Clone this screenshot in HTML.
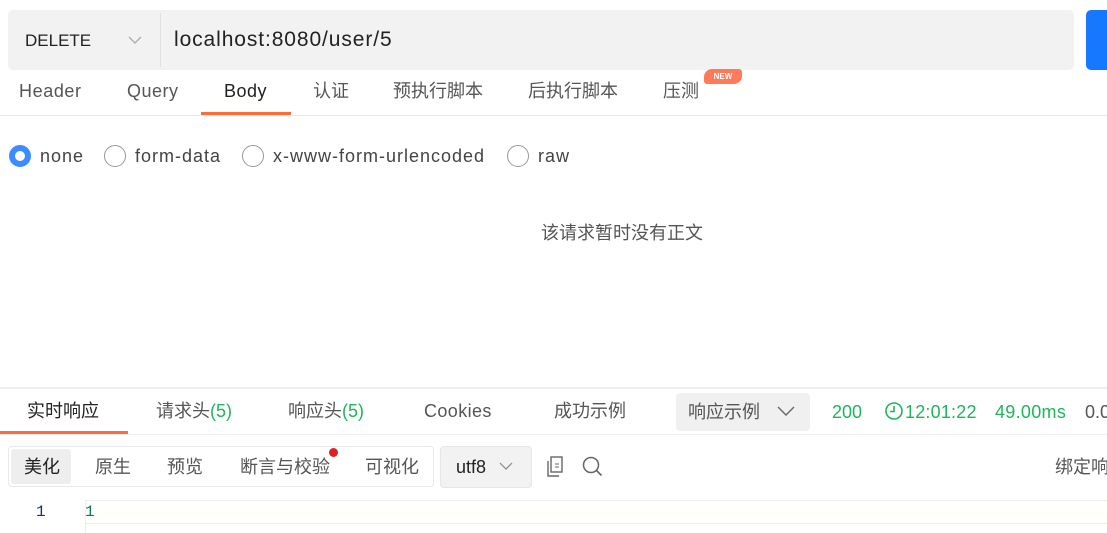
<html><head><style>
*{margin:0;padding:0;box-sizing:border-box}
body{width:1107px;height:533px;overflow:hidden;background:#fff;font-family:"Liberation Sans","Noto Sans CJK SC",sans-serif;position:relative;color:#333}
.a{position:absolute;white-space:nowrap;line-height:22px}
.r{position:absolute;width:22px;height:22px;border:1px solid #999;border-radius:50%;top:145px}
.g{color:#1fb55a}
.rl{letter-spacing:1px}
</style></head><body>
<div class="a" style="left:8px;top:10px;width:1066px;height:60px;background:#f2f2f2;border-radius:5px"></div>
<div class="a" style="left:160px;top:13px;width:1px;height:54px;background:#e0e0e0"></div>
<div class="a" style="left:25px;top:30px;font-size:17px;color:#222">DELETE</div>
<svg class="a" style="left:128px;top:35px" width="14" height="10"><path d="M1 2l6 6 6-6" fill="none" stroke="#aaa" stroke-width="1.3"/></svg>
<div class="a" style="left:174px;top:29px;font-size:21px;color:#222;letter-spacing:0.9px">localhost:8080/user/5</div>
<div class="a" style="left:1086px;top:10px;width:30px;height:60px;background:#1677ff;border-radius:5px"></div>

<div class="a" style="left:19px;top:80px;font-size:18px;color:#555;letter-spacing:0.6px">Header</div>
<div class="a" style="left:127px;top:80px;font-size:18px;color:#555;letter-spacing:0.5px">Query</div>
<div class="a" style="left:224px;top:80px;font-size:18px;color:#222;letter-spacing:0.5px">Body</div>
<div class="a" style="left:313px;top:80px;font-size:18px;color:#555">认证</div>
<div class="a" style="left:393px;top:80px;font-size:18px;color:#555">预执行脚本</div>
<div class="a" style="left:528px;top:80px;font-size:18px;color:#555">后执行脚本</div>
<div class="a" style="left:663px;top:80px;font-size:18px;color:#555">压测</div>
<div class="a" style="left:704px;top:69px;width:38px;height:15px;background:#ff7a5a;border-radius:8px 3px 8px 3px;color:#fff;font-size:8px;font-weight:bold;text-align:center;line-height:15px">NEW</div>
<div class="a" style="left:201px;top:112px;width:90px;height:3px;background:#ff6b3b"></div>
<div class="a" style="left:0;top:115px;width:1107px;height:1px;background:#e8e8e8"></div>

<div class="r" style="left:9px;border:6px solid #3b8cff"></div>
<div class="a rl" style="left:40px;top:145px;font-size:18px;color:#444">none</div>
<div class="r" style="left:104px"></div>
<div class="a rl" style="left:135px;top:145px;font-size:18px;color:#444">form-data</div>
<div class="r" style="left:242px"></div>
<div class="a rl" style="left:273px;top:145px;font-size:18px;color:#444">x-www-form-urlencoded</div>
<div class="r" style="left:507px"></div>
<div class="a rl" style="left:538px;top:145px;font-size:18px;color:#444">raw</div>
<div class="a" style="left:541px;top:222px;font-size:18px;color:#555">该请求暂时没有正文</div>

<div class="a" style="left:0;top:387px;width:1107px;height:2px;background:#eee"></div>
<div class="a" style="left:27px;top:400px;font-size:18px;color:#222">实时响应</div>
<div class="a" style="left:156px;top:400px;font-size:18px;color:#555">请求头<span class="g">(5)</span></div>
<div class="a" style="left:288px;top:400px;font-size:18px;color:#555">响应头<span class="g">(5)</span></div>
<div class="a" style="left:424px;top:400px;font-size:18px;color:#555;letter-spacing:0.4px">Cookies</div>
<div class="a" style="left:554px;top:400px;font-size:18px;color:#555">成功示例</div>
<div class="a" style="left:676px;top:393px;width:134px;height:38px;background:#f0f0f0;border-radius:4px"></div>
<div class="a" style="left:688px;top:401px;font-size:18px;color:#555">响应示例</div>
<svg class="a" style="left:777px;top:405px" width="18" height="12"><path d="M1 2l8 8 8-8" fill="none" stroke="#666" stroke-width="1.4"/></svg>
<div class="a g" style="left:832px;top:401px;font-size:18px">200</div>
<svg class="a" style="left:884px;top:401px" width="20" height="20"><circle cx="10" cy="10" r="8" fill="none" stroke="#1fb55a" stroke-width="1.6"/><path d="M10 5v5.5h-4" fill="none" stroke="#1fb55a" stroke-width="1.6"/></svg>
<div class="a g" style="left:905px;top:401px;font-size:18px;letter-spacing:0.2px">12:01:22</div>
<div class="a g" style="left:995px;top:401px;font-size:18px;letter-spacing:0.3px">49.00ms</div>
<div class="a" style="left:1085px;top:401px;font-size:18px;color:#555">0.0</div>
<div class="a" style="left:0;top:431px;width:128px;height:3px;background:#ff6b3b"></div>
<div class="a" style="left:0;top:434px;width:1107px;height:1px;background:#eee"></div>

<div class="a" style="left:8px;top:446px;width:426px;height:41px;border:1px solid #e8e8e8;border-radius:4px"></div>
<div class="a" style="left:11px;top:449px;width:60px;height:35px;background:#eee;border-radius:3px"></div>
<div class="a" style="left:24px;top:456px;font-size:18px;color:#222">美化</div>
<div class="a" style="left:95px;top:456px;font-size:18px;color:#555">原生</div>
<div class="a" style="left:167px;top:456px;font-size:18px;color:#555">预览</div>
<div class="a" style="left:240px;top:456px;font-size:18px;color:#555">断言与校验</div>
<div class="a" style="left:329px;top:448px;width:9px;height:9px;background:#e02020;border-radius:50%"></div>
<div class="a" style="left:365px;top:456px;font-size:18px;color:#555">可视化</div>
<div class="a" style="left:440px;top:446px;width:92px;height:42px;background:#f2f2f2;border:1px solid #e6e6e6;border-radius:4px"></div>
<div class="a" style="left:456px;top:456px;font-size:18px;color:#222">utf8</div>
<svg class="a" style="left:499px;top:462px" width="14" height="9"><path d="M1 1l6 6 6-6" fill="none" stroke="#888" stroke-width="1.2"/></svg>
<svg class="a" style="left:547px;top:456px" width="20" height="22"><rect x="4" y="1" width="11" height="15" fill="none" stroke="#666" stroke-width="1.4"/><path d="M1 5v15h11" fill="none" stroke="#666" stroke-width="1.4"/><path d="M8 8h4M8 11h4" stroke="#666"/></svg>
<svg class="a" style="left:582px;top:456px" width="22" height="22"><circle cx="9" cy="9" r="7.5" fill="none" stroke="#666" stroke-width="1.5"/><path d="M14.5 14.5l5 5" stroke="#666" stroke-width="1.6"/></svg>
<div class="a" style="left:1055px;top:456px;font-size:18px;color:#555">绑定响</div>

<div class="a" style="left:85px;top:500px;width:1022px;height:24px;border-top:1px solid #eee;border-bottom:1px solid #eee;background:#fffffc"></div>
<div class="a" style="left:85px;top:500px;width:1px;height:33px;background:#eee"></div>
<div class="a" style="left:36px;top:501px;font-size:16px;font-family:'Liberation Mono',monospace;color:#1a2a80">1</div>
<div class="a" style="left:85px;top:501px;font-size:16px;font-family:'Liberation Mono',monospace;color:#0a7a5a">1</div>
</body></html>
